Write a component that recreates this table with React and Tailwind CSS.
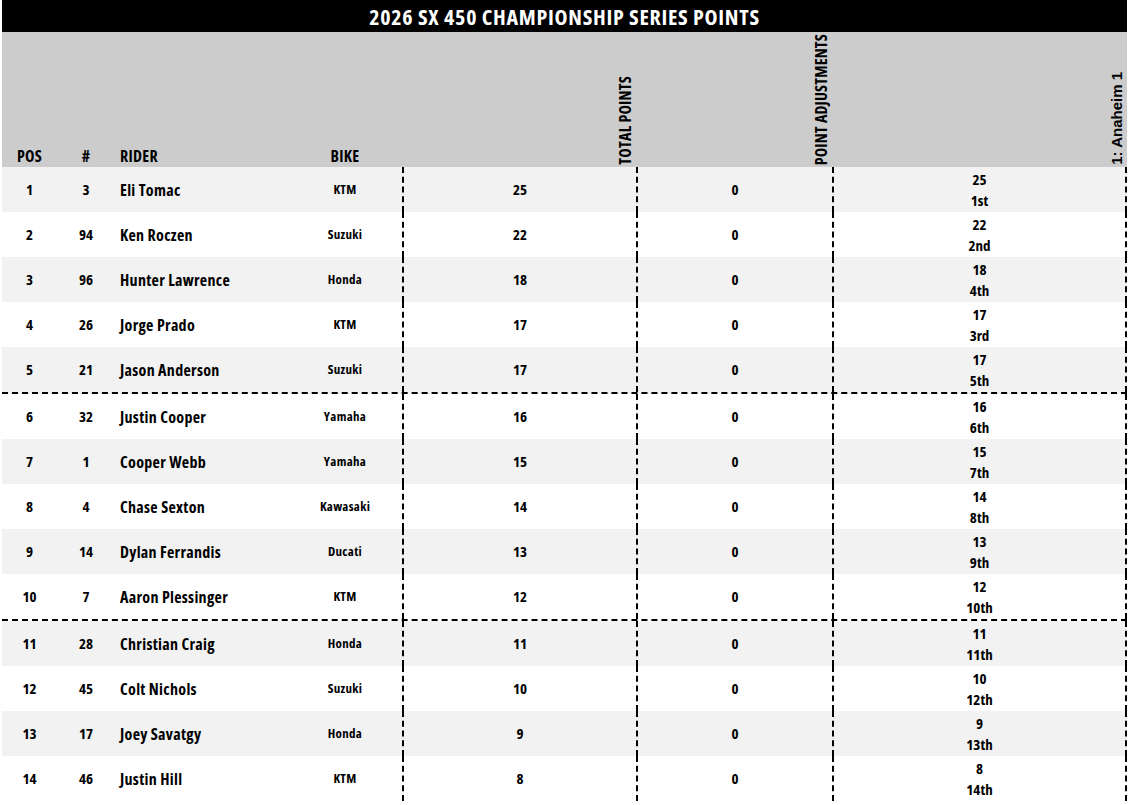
const RIDERS = [
  { pos: 1, num: 3, name: 'Eli Tomac', bike: 'KTM', total: 25, adj: 0, a1: 25, place: '1st' },
  { pos: 2, num: 94, name: 'Ken Roczen', bike: 'Suzuki', total: 22, adj: 0, a1: 22, place: '2nd' },
  { pos: 3, num: 96, name: 'Hunter Lawrence', bike: 'Honda', total: 18, adj: 0, a1: 18, place: '4th' },
  { pos: 4, num: 26, name: 'Jorge Prado', bike: 'KTM', total: 17, adj: 0, a1: 17, place: '3rd' },
  { pos: 5, num: 21, name: 'Jason Anderson', bike: 'Suzuki', total: 17, adj: 0, a1: 17, place: '5th' },
  { pos: 6, num: 32, name: 'Justin Cooper', bike: 'Yamaha', total: 16, adj: 0, a1: 16, place: '6th' },
  { pos: 7, num: 1, name: 'Cooper Webb', bike: 'Yamaha', total: 15, adj: 0, a1: 15, place: '7th' },
  { pos: 8, num: 4, name: 'Chase Sexton', bike: 'Kawasaki', total: 14, adj: 0, a1: 14, place: '8th' },
  { pos: 9, num: 14, name: 'Dylan Ferrandis', bike: 'Ducati', total: 13, adj: 0, a1: 13, place: '9th' },
  { pos: 10, num: 7, name: 'Aaron Plessinger', bike: 'KTM', total: 12, adj: 0, a1: 12, place: '10th' },
  { pos: 11, num: 28, name: 'Christian Craig', bike: 'Honda', total: 11, adj: 0, a1: 11, place: '11th' },
  { pos: 12, num: 45, name: 'Colt Nichols', bike: 'Suzuki', total: 10, adj: 0, a1: 10, place: '12th' },
  { pos: 13, num: 17, name: 'Joey Savatgy', bike: 'Honda', total: 9, adj: 0, a1: 9, place: '13th' },
  { pos: 14, num: 46, name: 'Justin Hill', bike: 'KTM', total: 8, adj: 0, a1: 8, place: '14th' },
];

const COLS = 'grid grid-cols-[55px_58px_173px_114px_234px_196px_295px]';

const VerticalHead = ({ children, className = '' }) => (
  <div className="flex items-end justify-end pr-[3px] pb-[2px]">
    <span className={`[writing-mode:vertical-rl] rotate-180 whitespace-nowrap leading-none ${className}`}>{children}</span>
  </div>
);

export default function App() {
  return (
    <div className="bg-white min-h-[805px] pl-[2px] font-['Open_Sans',sans-serif] font-bold [font-stretch:75%] text-black">
      <div className="w-[1125px]">
        {/* title */}
        <div className="h-8 bg-black text-white text-[22px] tracking-[0.7px] leading-8 text-center">
          2026 SX 450 CHAMPIONSHIP SERIES POINTS
        </div>

        {/* header */}
        <div className={`${COLS} h-[135px] bg-[#cccccc] text-[16px] tracking-[0.3px]`}>
          <div className="self-end text-center pb-[1px] leading-5">POS</div>
          <div className="self-end text-center pb-[1px] leading-5">#</div>
          <div className="self-end pl-[5px] pb-[1px] leading-5">RIDER</div>
          <div className="self-end text-center pb-[1px] leading-5">BIKE</div>
          <VerticalHead className="tracking-[0.2px]">TOTAL POINTS</VerticalHead>
          <VerticalHead className="tracking-[0.15px]">POINT ADJUSTMENTS</VerticalHead>
          <VerticalHead className="font-['Liberation_Sans',Arial,sans-serif] [font-stretch:100%] text-[15px] tracking-normal">1: Anaheim 1</VerticalHead>
        </div>

        {/* rows */}
        {RIDERS.map((r, i) => (
          <div
            key={r.pos}
            className={`${COLS} ${i % 2 === 0 ? 'bg-[#f2f2f2]' : 'bg-white'} ${r.pos === 5 || r.pos === 10 ? 'border-b-2 border-dashed border-black' : ''}`}
          >
            <div className="h-[45px] flex items-center justify-center text-[15px]">{r.pos}</div>
            <div className="h-[45px] flex items-center justify-center text-[15px]">{r.num}</div>
            <div className="h-[45px] flex items-center pl-[5px] text-[16px] tracking-[0.3px]">{r.name}</div>
            <div className="h-[45px] flex items-center justify-center text-[13px] tracking-[0.3px]">{r.bike}</div>
            <div className="h-[45px] flex items-center justify-center text-[15px] border-l-2 border-dashed border-black">{r.total}</div>
            <div className="h-[45px] flex items-center justify-center text-[15px] border-l-2 border-dashed border-black">{r.adj}</div>
            <div className="h-[45px] flex flex-col items-center justify-center text-[15px] leading-[21px] border-x-2 border-dashed border-black">
              <span>{r.a1}</span>
              <span>{r.place}</span>
            </div>
          </div>
        ))}
      </div>
    </div>
  );
}
